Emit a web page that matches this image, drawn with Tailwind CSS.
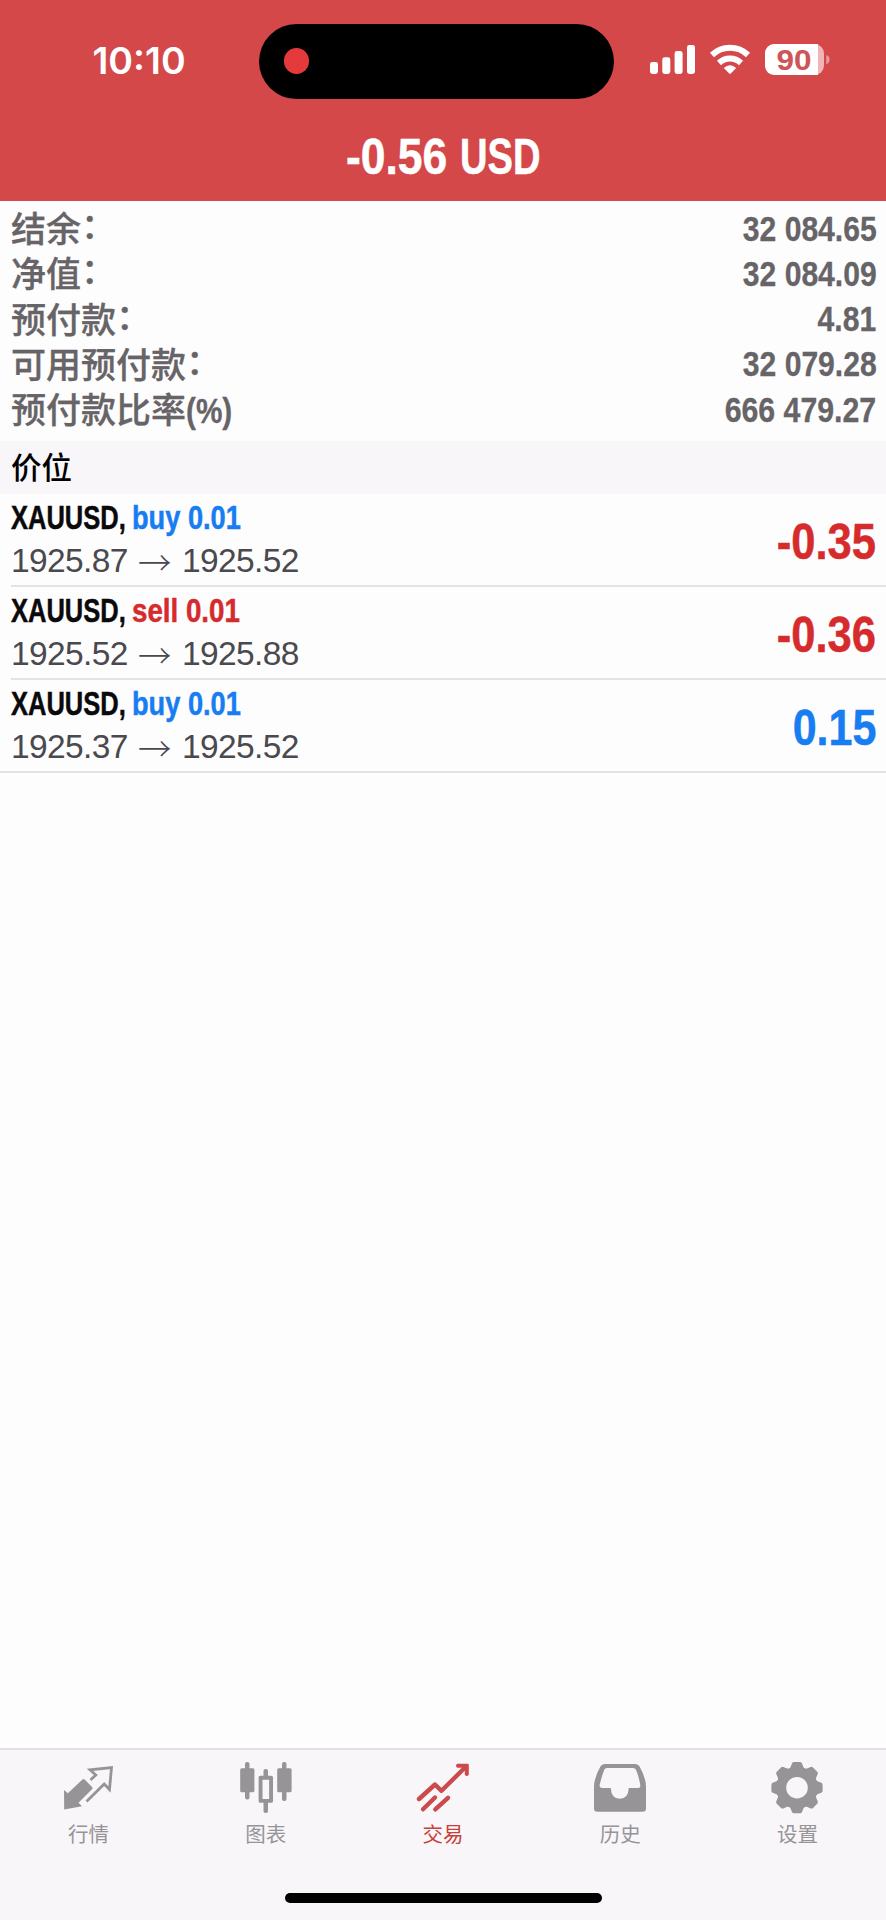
<!DOCTYPE html>
<html lang="zh-CN">
<head>
<meta charset="utf-8">
<title>交易</title>
<script src="https://cdn.jsdelivr.net/npm/@tailwindcss/browser@4"></script>
</head>
<body class="bg-[#fefdfe]">
<div class="flex h-[1920px] w-[886px] flex-col overflow-hidden bg-[#fefdfe] font-['Liberation_Sans','Noto_Sans_CJK_SC',sans-serif]">

  <header class="flex h-[201px] shrink-0 flex-col bg-[#d4484a] text-white">
    <div class="flex h-[75px] mt-[23.5px] shrink-0 items-center">
      <div class="w-[259px] pl-[92.5px] font-['Inter',sans-serif] text-[37.5px] leading-none font-semibold">10:10</div>
      <div class="flex h-[75px] w-[354.5px] shrink-0 items-center rounded-full bg-black pl-[24.5px]">
        <div class="size-[25.5px] rounded-full bg-[#e43a3b]"></div>
      </div>
      <svg class="ml-[36.5px] h-[31px] w-[180px] -mt-[3px] shrink-0" viewBox="650 44 180 31" fill="#fff">
        <rect x="650" y="62" width="8" height="12" rx="2.4"/>
        <rect x="662.3" y="57.3" width="8" height="16.7" rx="2.4"/>
        <rect x="674.6" y="51" width="8" height="23" rx="2.4"/>
        <rect x="687" y="45" width="8" height="29" rx="2.4"/>
        <g fill="none" stroke="#fff" stroke-width="6">
          <path d="M712 55 A26 26 0 0 1 748 55"/>
          <path d="M719 63 A16 16 0 0 1 741 63"/>
        </g>
        <path d="M723.8 68 Q730 62.5 736.2 68 L731 73.2 Q730 74.2 729 73.2 Z"/>
        <rect x="765" y="44" width="59" height="31" rx="9.5" fill="#f0b5b6"/>
        <path d="M774.5 44 H818 V75 H774.5 A9.5 9.5 0 0 1 765 65.5 V53.5 A9.5 9.5 0 0 1 774.5 44 Z"/>
        <path d="M826.2 55 Q829.6 56.3 829.6 59.6 Q829.6 63 826.2 64.3 Z" fill="#e59a9b"/>
        <text x="794" y="69.6" text-anchor="middle" font-family="Liberation Sans, sans-serif" font-weight="700" font-size="29" textLength="35" lengthAdjust="spacingAndGlyphs" fill="#cf5457">90</text>
      </svg>
    </div>
    <h1 class="mt-[29px] flex pl-[346px] text-[50.5px] leading-[58px] font-bold [-webkit-text-stroke:0.5px]"><span class="w-[113.5px] origin-left scale-x-[0.88]">-0.56&nbsp;</span><span class="origin-left scale-x-[0.755]">USD</span></h1>
  </header>

  <section class="flex h-[240px] shrink-0 flex-col pr-[9.5px] pl-[11px] pt-[4.5px] text-[35px] leading-[45.3px] text-[#666467]">
    <div class="flex h-[45.3px] items-center justify-between"><span class="mt-[3px] flex font-medium [-webkit-text-stroke:0.3px]">结余<span class="-translate-y-[3px]">：</span></span><span class="origin-right scale-x-[0.86] font-bold [-webkit-text-stroke:0.3px]">32 084.65</span></div>
    <div class="flex h-[45.3px] items-center justify-between"><span class="mt-[3px] flex font-medium [-webkit-text-stroke:0.3px]">净值<span class="-translate-y-[3px]">：</span></span><span class="origin-right scale-x-[0.86] font-bold [-webkit-text-stroke:0.3px]">32 084.09</span></div>
    <div class="flex h-[45.3px] items-center justify-between"><span class="mt-[3px] flex font-medium [-webkit-text-stroke:0.3px]">预付款<span class="-translate-y-[3px]">：</span></span><span class="origin-right scale-x-[0.86] font-bold [-webkit-text-stroke:0.3px]">4.81</span></div>
    <div class="flex h-[45.3px] items-center justify-between"><span class="mt-[3px] flex font-medium [-webkit-text-stroke:0.3px]">可用预付款<span class="-translate-y-[3px]">：</span></span><span class="origin-right scale-x-[0.86] font-bold [-webkit-text-stroke:0.3px]">32 079.28</span></div>
    <div class="flex h-[45.3px] items-center justify-between"><span class="mt-[3px] flex font-medium [-webkit-text-stroke:0.3px]">预付款比率<span class="origin-left scale-x-[0.85] font-bold">(%)</span></span><span class="origin-right scale-x-[0.865] font-bold [-webkit-text-stroke:0.3px]">666 479.27</span></div>
  </section>

  <h2 class="flex h-[53px] shrink-0 items-center bg-[#f8f6f9] pt-[2px] pl-[11px] text-[30.5px] font-medium text-black">价位</h2>

  <ul class="flex flex-col">
    <li class="h-[93px] pl-[11px]">
      <div class="flex h-full items-center justify-between border-b-2 border-[#e3e2e6] pr-[10px]">
        <div class="flex flex-col">
          <div class="flex h-[44px] items-center text-[34px] font-bold [-webkit-text-stroke:0.5px]"><span class="w-[121px] origin-left scale-x-[0.75] text-[#0a0a0c]">XAUUSD,</span><span class="origin-left scale-x-[0.8] text-[#177df0]">buy 0.01</span></div>
          <div class="flex h-[44px] items-center text-[33.5px] tracking-[-0.6px] text-[#4a494e]"><span>1925.87</span><span class="w-[54px] pr-px text-center font-['Noto_Sans_CJK_SC'] font-light">→</span><span>1925.52</span></div>
        </div>
        <span class="mt-[4px] origin-right scale-x-[0.87] text-[50px] leading-none font-bold text-[#d52b2d] [-webkit-text-stroke:0.5px]">-0.35</span>
      </div>
    </li>
    <li class="h-[93px] pl-[11px]">
      <div class="flex h-full items-center justify-between border-b-2 border-[#e3e2e6] pr-[10px]">
        <div class="flex flex-col">
          <div class="flex h-[44px] items-center text-[34px] font-bold [-webkit-text-stroke:0.5px]"><span class="w-[121px] origin-left scale-x-[0.75] text-[#0a0a0c]">XAUUSD,</span><span class="origin-left scale-x-[0.815] text-[#d52b2d]">sell 0.01</span></div>
          <div class="flex h-[44px] items-center text-[33.5px] tracking-[-0.6px] text-[#4a494e]"><span>1925.52</span><span class="w-[54px] pr-px text-center font-['Noto_Sans_CJK_SC'] font-light">→</span><span>1925.88</span></div>
        </div>
        <span class="mt-[4px] origin-right scale-x-[0.87] text-[50px] leading-none font-bold text-[#d52b2d] [-webkit-text-stroke:0.5px]">-0.36</span>
      </div>
    </li>
    <li class="h-[93px]">
      <div class="flex h-full items-center justify-between border-b-2 border-[#e3e2e6] pr-[10px] pl-[11px]">
        <div class="flex flex-col">
          <div class="flex h-[44px] items-center text-[34px] font-bold [-webkit-text-stroke:0.5px]"><span class="w-[121px] origin-left scale-x-[0.75] text-[#0a0a0c]">XAUUSD,</span><span class="origin-left scale-x-[0.8] text-[#177df0]">buy 0.01</span></div>
          <div class="flex h-[44px] items-center text-[33.5px] tracking-[-0.6px] text-[#4a494e]"><span>1925.37</span><span class="w-[54px] pr-px text-center font-['Noto_Sans_CJK_SC'] font-light">→</span><span>1925.52</span></div>
        </div>
        <span class="mt-[4px] origin-right scale-x-[0.86] text-[50px] leading-none font-bold text-[#177df0] [-webkit-text-stroke:0.5px]">0.15</span>
      </div>
    </li>
  </ul>

  <footer class="mt-auto flex h-[172px] shrink-0 flex-col items-center border-t-2 border-[#e1e0e3] bg-[#f8f6f9]">
    <nav class="grid h-[143px] w-full grid-cols-5 text-[20.5px] leading-[28px] text-[#969497]">
      <a class="flex flex-col items-center gap-[5px] pt-[10px]">
        <svg class="h-[56px] w-[54px]" viewBox="62 1760 54 56">
          <path fill="#969497" d="M64 1790 L67.8 1793.2 L82.5 1779.5 Q83.5 1778.6 84.6 1779.6 L92.3 1787.2 Q93 1788.2 92 1789.2 L78.5 1802.8 L82 1806.3 L64.2 1809.6 Z"/>
          <path fill="none" stroke="#969497" stroke-width="2.8" d="M90.5 1780 L95.8 1775 L90 1769.8 L111.5 1767.6 L109.5 1789.5 L104.2 1784 L86.5 1801.5"/>
        </svg>
        <span>行情</span>
      </a>
      <a class="flex flex-col items-center gap-[5px] pt-[10px]">
        <svg class="h-[56px] w-[54px]" viewBox="238.8 1760 54 56" fill="#969497">
          <rect x="244.8" y="1762" width="4.5" height="37.5" rx="2"/><rect x="240" y="1768.3" width="14.2" height="24" rx="1.5"/>
          <rect x="281.8" y="1762" width="4.5" height="39" rx="2"/><rect x="277" y="1768.3" width="14.4" height="24" rx="1.5"/>
          <rect x="263.3" y="1769" width="4.5" height="9" rx="2"/><rect x="263.3" y="1800" width="4.5" height="13" rx="2"/>
          <path fill-rule="evenodd" d="M260 1775.7 H271.2 Q272.8 1775.7 272.8 1777.3 V1801.2 Q272.8 1802.8 271.2 1802.8 H260 Q258.4 1802.8 258.4 1801.2 V1777.3 Q258.4 1775.7 260 1775.7 Z M262.3 1779.8 V1798.9 H268.9 V1779.8 Z"/>
        </svg>
        <span>图表</span>
      </a>
      <a class="flex flex-col items-center gap-[5px] pt-[10px] text-[#c8403a]">
        <svg class="h-[56px] w-[54px]" viewBox="416 1760 54 56" fill="none" stroke="#cb4a4c" stroke-width="4.4" stroke-linecap="round">
          <path stroke-linejoin="round" d="M419 1799 L435 1784.5 L441.5 1790.8 L465 1767.5"/>
          <path fill="#cb4a4c" stroke="none" d="M457.2 1763.7 H467.4 Q468.8 1763.7 468.8 1765.1 V1774.8 Q466.8 1777.2 464.8 1774.8 V1770.5 L462 1767.7 H457.2 Q454.8 1765.7 457.2 1763.7 Z"/>
          <path d="M423 1809.3 L435 1797.5 M435.3 1809.3 L448 1797.8"/>
        </svg>
        <span>交易</span>
      </a>
      <a class="flex flex-col items-center gap-[5px] pt-[10px]">
        <svg class="h-[56px] w-[54px]" viewBox="593 1760 54 56" fill="#969497">
          <path fill-rule="evenodd" d="M604.5 1764 H635.5 Q638.2 1764 639.6 1766.6 Q646 1778 646 1787 V1808.5 Q646 1811.8 642.7 1811.8 H597.3 Q594 1811.8 594 1808.5 V1787 Q594 1778 600.4 1766.6 Q601.8 1764 604.5 1764 Z M607 1767.9 Q605 1767.9 604.3 1769.6 Q601.5 1777 599.6 1785.2 Q599.2 1788 602 1788 H610.8 Q611.3 1798.8 619.7 1798.8 Q628.3 1798.8 628.8 1788 H638.2 Q640.8 1788 640.3 1785.2 Q639 1777 635.9 1769.6 Q635.2 1767.9 633 1767.9 Z"/>
        </svg>
        <span>历史</span>
      </a>
      <a class="flex flex-col items-center gap-[5px] pt-[10px]">
        <svg class="h-[56px] w-[54px]" viewBox="-27 -27.7 54 56" fill="#969497">
          <defs><path id="tooth" d="M-9.5 -17 L-6.5 -20.5 L-5 -24.3 Q-4.4 -25.6 -3 -25.6 H3 Q4.4 -25.6 5 -24.3 L6.5 -20.5 L9.5 -17 Z"/></defs>
          <circle r="15.8" fill="none" stroke="#969497" stroke-width="10"/>
          <use href="#tooth"/><use href="#tooth" transform="rotate(45)"/><use href="#tooth" transform="rotate(90)"/><use href="#tooth" transform="rotate(135)"/>
          <use href="#tooth" transform="rotate(180)"/><use href="#tooth" transform="rotate(225)"/><use href="#tooth" transform="rotate(270)"/><use href="#tooth" transform="rotate(315)"/>
        </svg>
        <span>设置</span>
      </a>
    </nav>
    <div class="h-[10px] w-[317px] rounded-full bg-black"></div>
  </footer>
</div>
</body>
</html>
